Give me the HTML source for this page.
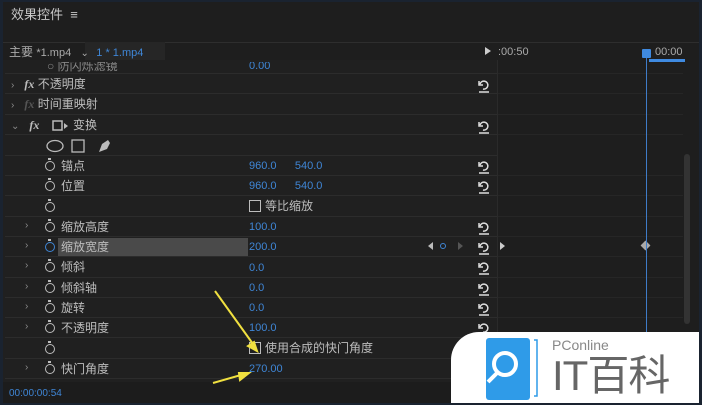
<!DOCTYPE html>
<html><head><meta charset="utf-8"><style>
*{margin:0;padding:0;box-sizing:border-box}
body{width:702px;height:405px;background:#1a2330;overflow:hidden;font-family:"Liberation Sans","Noto Sans CJK SC",sans-serif;position:relative}
#p{position:absolute;left:3px;top:2px;width:696px;height:401px;background:#1e1e1e;overflow:hidden}
.a{position:absolute;white-space:nowrap}
.t{color:#bdbdbd;font-size:12px;line-height:14px}
.b{color:#3f86d6;font-size:11px;line-height:14px}
.ln{position:absolute;left:2px;width:492px;height:1px;background:#2c2c2c}
.tl{position:absolute;left:495px;width:185px;height:1px;background:#262626}
.ar{color:#8a8a8a;font-size:10px}
.sw{position:absolute;width:10px;height:10px;border:1.5px solid #bdbdbd;border-radius:50%}
.sw:before{content:"";position:absolute;left:2px;top:-4px;width:3px;height:2px;background:#bdbdbd}
.cb{position:absolute;width:12px;height:12px;border:1.5px solid #bdbdbd}
</style></head><body><div id="p">
<div class="a t" style="left:8px;top:6px;font-size:13px;color:#c8c8c8">效果控件 &nbsp;≡</div>
<div class="a" style="left:0;top:40px;width:696px;height:1px;background:#2e2e2e"></div>
<div class="a" style="left:82px;top:40px;width:80px;height:18px;background:#262626"></div>
<div class="a t" style="left:6px;top:43px;color:#aaa">主要 <span style="font-size:11px">*1.mp4</span> <span style="font-size:10px;margin-left:6px">⌄</span> <span class="b" style="font-size:11px;margin-left:4px">1 * 1.mp4</span></div>
<div class="a" style="left:482px;top:45px;width:0;height:0;border-left:6px solid #ccc;border-top:4px solid transparent;border-bottom:4px solid transparent"></div>
<div class="a t" style="left:495px;top:43px;font-size:11px;color:#aaa">:00:50</div>
<div class="a t" style="left:652px;top:43px;font-size:11px;color:#aaa">00:00</div>
<div class="a" style="left:494px;top:58px;width:1px;height:322px;background:#2a2a2a"></div>
<div class="a" style="left:0;top:58px;width:494px;height:322px;background:#202020"></div>
<div class="ln" style="top:71px"></div><div class="ln" style="top:91px"></div><div class="ln" style="top:112px"></div><div class="ln" style="top:132px"></div><div class="ln" style="top:153px"></div><div class="ln" style="top:173px"></div><div class="ln" style="top:193px"></div><div class="ln" style="top:214px"></div><div class="ln" style="top:234px"></div><div class="ln" style="top:254px"></div><div class="ln" style="top:275px"></div><div class="ln" style="top:295px"></div><div class="ln" style="top:315px"></div><div class="ln" style="top:335px"></div><div class="ln" style="top:356px"></div><div class="ln" style="top:376px"></div>
<div class="tl" style="top:71px"></div><div class="tl" style="top:91px"></div><div class="tl" style="top:112px"></div><div class="tl" style="top:132px"></div><div class="tl" style="top:173px"></div><div class="tl" style="top:193px"></div><div class="tl" style="top:214px"></div><div class="tl" style="top:234px"></div><div class="tl" style="top:254px"></div><div class="tl" style="top:275px"></div><div class="tl" style="top:295px"></div><div class="tl" style="top:315px"></div>
<div class="a t" style="left:44px;top:57px;color:#888;clip-path:inset(3px 0 0 0)">○ 防闪烁滤镜</div><div class="a b" style="left:246px;top:57px;clip-path:inset(3px 0 0 0)">0.00</div>
<div class="a t" style="left:8px;top:75px"><span class="ar">›</span> &nbsp;&nbsp;<i style="font-weight:bold;font-family:'Liberation Serif'">fx</i> 不透明度</div>
<div class="a t" style="left:8px;top:95px"><span class="ar">›</span> &nbsp;&nbsp;<i style="font-weight:bold;color:#555;font-family:'Liberation Serif'">fx</i> 时间重映射</div>
<div class="a t" style="left:8px;top:116px"><span class="ar">⌄</span> &nbsp;&nbsp;<i style="font-weight:bold;font-family:'Liberation Serif'">fx</i></div>
<svg class="a" style="left:48px;top:117px" width="20" height="14"><rect x="2" y="2" width="9" height="9" fill="none" stroke="#bbb" stroke-width="1.5"/><path d="M13 4l4 3-4 3z" fill="#bbb"/></svg>
<div class="a t" style="left:70px;top:116px">变换</div>
<svg class="a" style="left:42px;top:136px" width="80" height="16"><ellipse cx="10" cy="8" rx="8" ry="5.5" fill="none" stroke="#bbb" stroke-width="1.3"/><rect x="27" y="2" width="12" height="12" fill="none" stroke="#bbb" stroke-width="1.3"/><path d="M54 14l3-8 6-4 2 3-3 6z" fill="#bbb"/></svg>
<div class="sw" style="left:42px;top:159px"></div><div class="a t" style="left:58px;top:157px">锚点</div><div class="a b" style="left:246px;top:157px">960.0 &nbsp;&nbsp;&nbsp;&nbsp;&nbsp;540.0</div>
<div class="sw" style="left:42px;top:179px"></div><div class="a t" style="left:58px;top:177px">位置</div><div class="a b" style="left:246px;top:177px">960.0 &nbsp;&nbsp;&nbsp;&nbsp;&nbsp;540.0</div>
<div class="sw" style="left:42px;top:200px"></div><div class="cb" style="left:246px;top:198px"></div><div class="a t" style="left:262px;top:197px">等比缩放</div>
<div class="a ar" style="left:22px;top:218px">›</div><div class="sw" style="left:42px;top:220px"></div><div class="a t" style="left:58px;top:218px">缩放高度</div><div class="a b" style="left:246px;top:218px">100.0</div>
<div class="a" style="left:55px;top:236px;width:190px;height:18px;background:#4a4a4a"></div>
<div class="a ar" style="left:22px;top:238px">›</div><div class="sw" style="left:42px;top:240px;border-color:#3f86d6"></div><div class="a t" style="left:58px;top:238px">缩放宽度</div><div class="a b" style="left:246px;top:238px">200.0</div>
<div class="a" style="left:425px;top:240px;border-right:5px solid #bbb;border-top:4px solid transparent;border-bottom:4px solid transparent"></div>
<div class="a" style="left:437px;top:241px;width:6px;height:6px;border:1.5px solid #3f86d6;border-radius:50%"></div>
<div class="a" style="left:455px;top:240px;border-left:5px solid #555;border-top:4px solid transparent;border-bottom:4px solid transparent"></div>
<div class="a" style="left:497px;top:240px;border-left:5px solid #ccc;border-top:4px solid transparent;border-bottom:4px solid transparent"></div>
<div class="a" style="left:639px;top:240px;width:7px;height:7px;background:#aaa;transform:rotate(45deg)"></div>
<div class="a ar" style="left:22px;top:258px">›</div><div class="sw" style="left:42px;top:260px"></div><div class="a t" style="left:58px;top:258px">倾斜</div><div class="a b" style="left:246px;top:259px">0.0</div>
<div class="a ar" style="left:22px;top:279px">›</div><div class="sw" style="left:42px;top:281px"></div><div class="a t" style="left:58px;top:279px">倾斜轴</div><div class="a b" style="left:246px;top:279px">0.0</div>
<div class="a ar" style="left:22px;top:299px">›</div><div class="sw" style="left:42px;top:301px"></div><div class="a t" style="left:58px;top:299px">旋转</div><div class="a b" style="left:246px;top:299px">0.0</div>
<div class="a ar" style="left:22px;top:319px">›</div><div class="sw" style="left:42px;top:321px"></div><div class="a t" style="left:58px;top:319px">不透明度</div><div class="a b" style="left:246px;top:319px">100.0</div>
<div class="sw" style="left:42px;top:342px"></div><div class="cb" style="left:246px;top:340px"></div><div class="a t" style="left:262px;top:339px">使用合成的快门角度</div>
<div class="a ar" style="left:22px;top:360px">›</div><div class="sw" style="left:42px;top:362px"></div><div class="a t" style="left:58px;top:360px">快门角度</div><div class="a b" style="left:246px;top:360px">270.00</div>
<svg class="a" style="left:0;top:0" width="496" height="380"><g fill="none" stroke="#ddd" stroke-width="1.5">
<path d="M477 82a4 4 0 1 1 3 5M476 79v4h4M476 90h10"/><path d="M477 123a4 4 0 1 1 3 5M476 120v4h4M476 131h10"/>
<path d="M477 163a4 4 0 1 1 3 5M476 160v4h4M476 171h10"/><path d="M477 183a4 4 0 1 1 3 5M476 180v4h4M476 191h10"/>
<path d="M477 224a4 4 0 1 1 3 5M476 221v4h4M476 232h10"/><path d="M477 244a4 4 0 1 1 3 5M476 241v4h4M476 252h10"/>
<path d="M477 264a4 4 0 1 1 3 5M476 261v4h4M476 272h10"/><path d="M477 285a4 4 0 1 1 3 5M476 282v4h4M476 293h10"/>
<path d="M477 305a4 4 0 1 1 3 5M476 302v4h4M476 313h10"/><path d="M477 325a4 4 0 1 1 3 5M476 322v4h4M476 333h10"/>
</g></svg>
<div class="a" style="left:643px;top:53px;width:1px;height:280px;background:#3f7cc8"></div>
<div class="a" style="left:639px;top:47px;width:9px;height:9px;background:#3f8ae0;border-radius:1px"></div>
<div class="a" style="left:646px;top:57px;width:36px;height:3px;background:#3f8ae0"></div>
<div class="a" style="left:681px;top:152px;width:6px;height:170px;background:#333;border-radius:3px"></div>
<div class="a" style="left:0;top:380px;width:696px;height:21px;background:#1c1c1c"></div>
<div class="a b" style="left:6px;top:385px;font-size:10px">00:00:00:54</div>
<svg class="a" style="left:0;top:0" width="300" height="400"><g stroke="#f0e040" stroke-width="2" fill="#f0e040">
<path d="M212 289L250 342"/><path d="M254 349l-9-5 6-4z"/>
<path d="M210 381L238 373"/><path d="M246 371l-9 7-1-7z"/></g></svg>
<div class="a" style="left:448px;top:330px;width:260px;height:80px;background:#fff;border-top-left-radius:28px"></div>
<svg class="a" style="left:480px;top:334px" width="60" height="66"><rect x="3" y="2" width="44" height="62" rx="3" fill="#2f9be8"/><circle cx="22" cy="28" r="11" fill="none" stroke="#fff" stroke-width="4"/><path d="M14 37l-9 9" stroke="#fff" stroke-width="4"/><path d="M51 4h3v56h-3" fill="none" stroke="#2f9be8" stroke-width="1.5"/></svg>
<div class="a" style="left:549px;top:335px;font-size:14px;color:#888">PConline</div>
<div class="a" style="left:549px;top:350px;font-size:42px;line-height:48px;color:#666;letter-spacing:-1px">IT百科</div>
</div></body></html>
